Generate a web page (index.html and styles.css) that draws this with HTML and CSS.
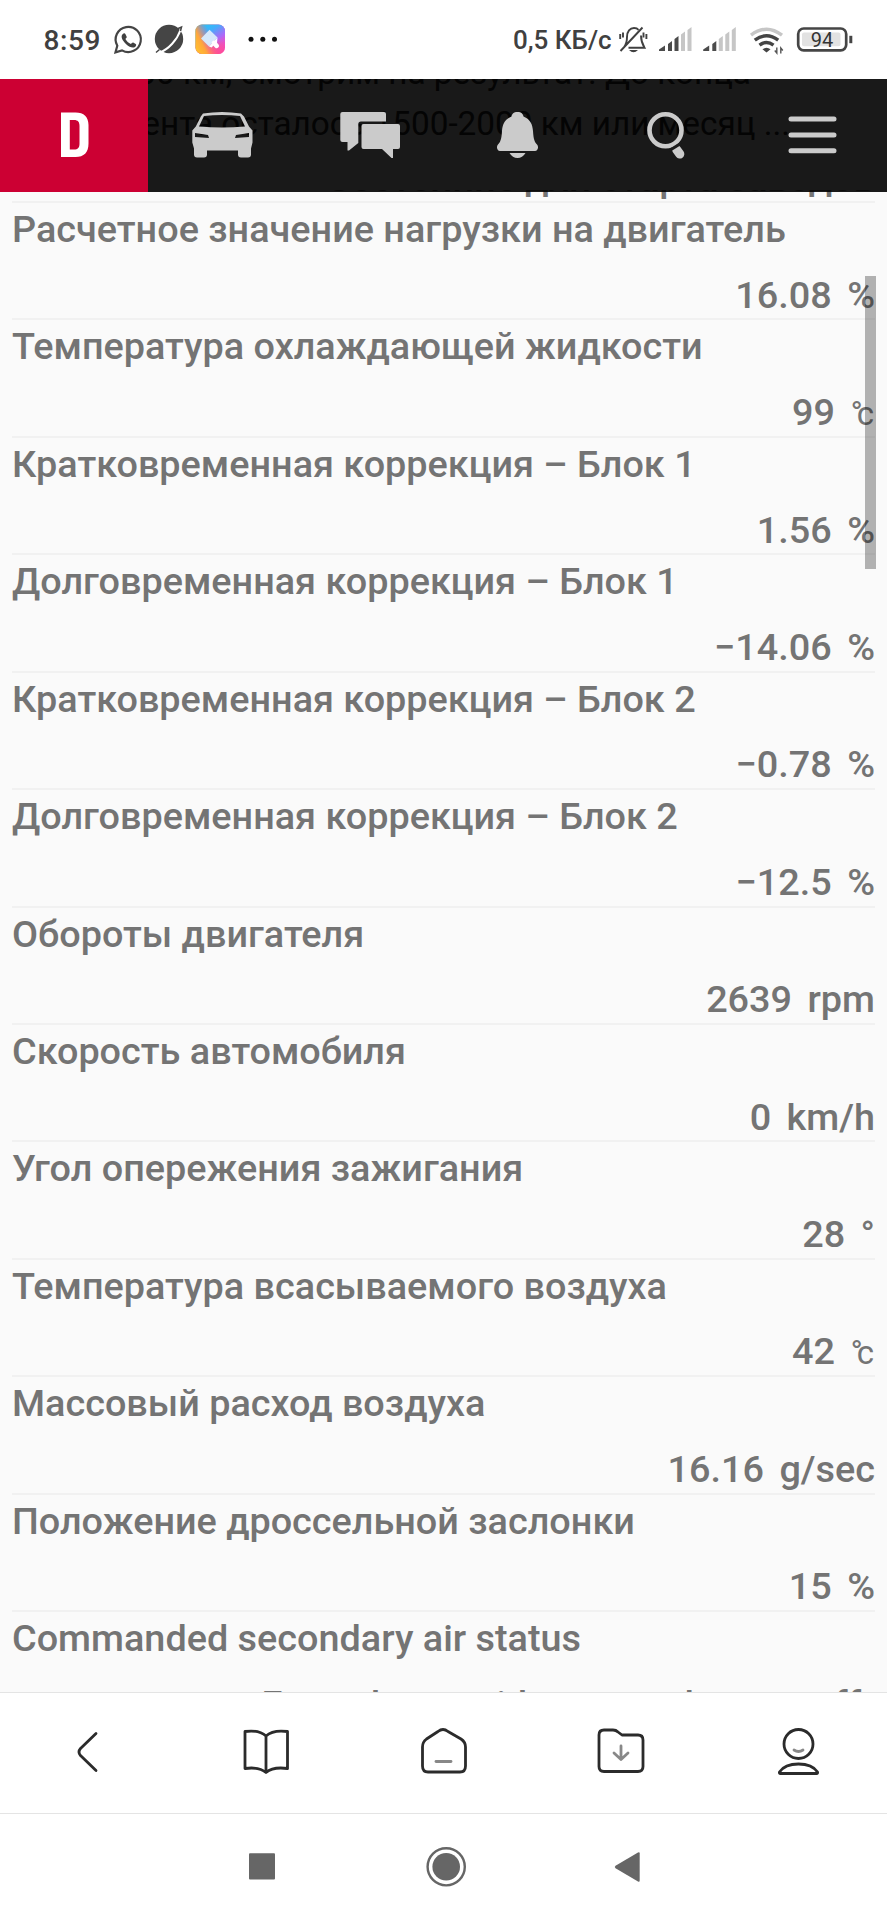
FILE: index.html
```
<!DOCTYPE html>
<html lang="ru">
<head>
<meta charset="utf-8">
<title>D</title>
<link rel="stylesheet" href="styles.css">
</head>
<body>
<div class="status">
  <span class="clock">8:59</span>
  <svg class="status-left" width="172" height="79" viewBox="110 0 172 79">
    <g fill="none" stroke="#454545" stroke-width="2.2"><path d="M115.500 52.300l1.800-6.600a12.600 12.600 0 1 1 4.700 4.700z"/></g>
    <path d="M122.800 34c1-1 2.200-.9 2.700.2l1.200 2.600c.3.900-.9 1.600-1.300 2.300 1.300 2.400 2.900 3.800 5.500 4.900.8-.6 1.500-1.700 2.300-1.400l2.500 1.300c.9.500.5 2.100-.7 3-2.100 1.500-5.600.300-8.800-2.700-4-3.800-6-7.800-3.400-10.200z" fill="#404040"/>
    <circle cx="169" cy="39" r="14.200" fill="#454545"/><path d="M159 53C169 49 177 40 180.500 30" stroke="#fff" stroke-width="2" fill="none"/><path d="M156 52.500l3.500-3M177 29l4.500-2-1 4" stroke="#454545" stroke-width="1.500" fill="none"/>
    <defs><linearGradient id="app" x1="0" y1="0" x2="1" y2="0"><stop offset="0" stop-color="#f9cb36"/><stop offset=".5" stop-color="#ff707c"/><stop offset="1" stop-color="#f04ad4"/></linearGradient><linearGradient id="sky" x1=".3" y1="0" x2=".9" y2=".9"><stop offset="0" stop-color="#2cc0f5"/><stop offset=".25" stop-color="#3fb0fb"/><stop offset=".6" stop-color="#a56bff" stop-opacity=".9"/><stop offset="1" stop-color="#ff4fa0" stop-opacity="0"/></linearGradient><linearGradient id="warm" x1="0" y1=".8" x2=".6" y2=".5"><stop offset="0" stop-color="#ffc02e"/><stop offset=".4" stop-color="#ffa63c"/><stop offset="1" stop-color="#ff5590" stop-opacity="0"/></linearGradient><linearGradient id="pink" x1="0" y1="1" x2="0" y2="0"><stop offset="0" stop-color="#ff4b95"/><stop offset=".45" stop-color="#ff4b95" stop-opacity="0"/></linearGradient></defs>
    <rect x="195.500" y="24.500" width="29.500" height="29.500" rx="6.500" fill="url(#app)"/><rect x="195.500" y="24.500" width="29.500" height="29.500" rx="6.500" fill="url(#sky)"/><rect x="195.500" y="24.500" width="29.500" height="29.500" rx="6.500" fill="url(#pink)"/><rect x="195.500" y="24.500" width="29.500" height="29.500" rx="6.500" fill="url(#warm)"/>
    <path d="M209.500 29.800l8 7.600-8.500 9-8-8z" fill="#d5e8fb"/><path d="M217.500 37.400l-8.500 9 2.600 1.200 2.400-2.600 2.600 2.600" fill="#fff"/><path d="M214 43l2.700 2.900" stroke="#fff" stroke-width="4.600" stroke-linecap="round"/>
    <g fill="#111"><circle cx="251" cy="39.300" r="2.500"/><circle cx="262.800" cy="39.300" r="2.500"/><circle cx="274.500" cy="39.300" r="2.500"/></g>
  </svg>
  <span class="speed">0,5 КБ/с</span>
  <svg class="status-right" width="235" height="79" viewBox="618 0 235 79">
    <g fill="none" stroke="#404040" stroke-width="1.900"><path d="M620.500 51l22-23.500M624 47c2.500-3 3-6 3-10 0-5.500 3-9 7-9 2 0 3.500.600 4.500 1.800M641 35.500c0 5 1 8 3.500 12.300H628.500M620.200 34v5M623 32.500v5M643.500 32.500v5M646.400 34v5"/></g><path d="M629 50h9q-4.500 4.500-9 0z" fill="#404040"/>
    <g fill="#4b4b4b"><path d="M659 51v-1.500l6-4V51zM668 44l4-3v10h-4zM674.500 39l4-3v15h-4z"/><path d="M703.200 51v-1.500l6-4V51zM712.300 44l4-3v10h-4z"/></g>
    <g fill="#c6c6c6"><path d="M681 34.500l4-3V51h-4zM687.500 30l4-3v24h-4zM718.800 39l4-3v15h-4zM725.300 34.500l4-3V51h-4zM731.800 30l4-3v24h-4z"/></g>
    <g fill="none" stroke-width="3.400"><path d="M751 35.200q15.500-12 31 0" stroke="#c6c6c6"/><path d="M754.800 40.200q11.700-9 23.400 0M759.500 45.200q7-5.300 14 0" stroke="#444"/></g><path d="M762.500 49.200q4-3 8 0l-4 3.300z" fill="#444"/><path d="M776.800 47.500v5.500l-2-2.500M780.800 53.500V48l2 2.500" fill="none" stroke="#555" stroke-width="1.400"/>
    <rect x="798.200" y="28.500" width="48" height="21.800" rx="5.500" fill="none" stroke="#454545" stroke-width="2.700"/><rect x="802" y="32.500" width="38.500" height="13.700" rx="2" fill="#e2e2e2"/><path d="M850.800 35.800v7.400" stroke="#454545" stroke-width="3"/>
    <text class="battery" x="822" y="46.500" text-anchor="middle">94</text>
  </svg>
</div>
<div class="nav">
  <div class="under"><p class="u1">500 км, смотрим на результат. До конца</p><p class="u2">эксперимента осталось 1500-2000 км или месяц ...</p></div>
  <div class="brand"><svg width="30" height="46" viewBox="0 0 30 46"><path fill-rule="evenodd" fill="#fff" d="M1 .5h14.500c8.500 0 13 4.500 13 12.500v18.500c0 9-4.500 13.500-13 13.500H1zM9.800 8v29.500h4.200c4 0 5.500-2 5.500-6V14c0-4-1.500-6-5.500-6z"/></svg></div>
  <div class="tab"><svg width="62" height="48" viewBox="191 111 62 48"><path fill-rule="evenodd" fill="#cbcbcb" d="M203 113.500q19-3 38 0l3 3 5 10 3.500 4v12l-1.500 6v6q0 3-3 3h-7q-3 0-3-3v-4H207v4q0 3-3 3h-7q-3 0-3-3v-6l-1.700-6v-12l3.500-4 5-10zM204 116l-5 10.500q23 2 46 0l-5-10.500q-18-2-36 0zM195 133v4l14 1-1-3zM249 133l-13 2-1 3 14-1z"/></svg></div>
  <div class="tab"><svg width="62" height="48" viewBox="339 111 62 48"><path fill="#cbcbcb" d="M342.500 112H384q2 0 2 2v7.500h-25q-2.700 0-2.700 2.700V143L349 150.500h-1.500V142h-5q-2.200 0-2.200-2v-26q0-2 2.200-2z"/><path fill="#cbcbcb" d="M363.500 124H398q2 0 2 2v21q0 2-2 2h-5v9h-1.500l-9.500-9h-18.500q-2 0-2-2v-21q0-2 2-2z"/></svg></div>
  <div class="tab"><svg width="62" height="48" viewBox="486.500 111 62 48"><path fill="#cbcbcb" d="M518 112c-4 0-5.500 2-6 4.500-7 3-9 8-9.500 14.500-.5 8-1.500 11-4 13.500-2 2-1 6.500 2 6.500h35c3 0 4-4.500 2-6.500-2.500-2.500-3.500-5.500-4-13.500-.5-6.500-2.500-11.500-9.500-14.500-.5-2.500-2-4.500-6-4.500zM510 153h16q-3 5-8 5t-8-5z"/></svg></div>
  <div class="tab"><svg width="62" height="48" viewBox="634.500 111 62 48"><circle cx="666" cy="130.300" r="16" fill="none" stroke="#cbcbcb" stroke-width="4.600"/><path d="M677 149.500l3.300 4.500" stroke="#cbcbcb" stroke-width="9" stroke-linecap="round"/><path d="M670 150.500l12-7.500" stroke="#1a1a1a" stroke-width="3"/></svg></div>
  <div class="tab"><svg width="62" height="48" viewBox="782 111 62 48"><path d="M791 119h43M791 135h43M791 150.800h43" stroke="#cbcbcb" stroke-width="5" stroke-linecap="round"/></svg></div>
</div>
<div class="list">
  <div class="peek">Состояние для старта заводов</div>
  <div class="row"><p class="label">Расчетное значение нагрузки на двигатель</p><p class="value">16.08 %</p></div>
  <div class="row"><p class="label">Температура охлаждающей жидкости</p><p class="value">99 <span class="deg"><span class="ring">°</span>c</span></p></div>
  <div class="row"><p class="label">Кратковременная коррекция – Блок 1</p><p class="value">1.56 %</p></div>
  <div class="row"><p class="label">Долговременная коррекция – Блок 1</p><p class="value">−14.06 %</p></div>
  <div class="row"><p class="label">Кратковременная коррекция – Блок 2</p><p class="value">−0.78 %</p></div>
  <div class="row"><p class="label">Долговременная коррекция – Блок 2</p><p class="value">−12.5 %</p></div>
  <div class="row"><p class="label">Обороты двигателя</p><p class="value">2639 rpm</p></div>
  <div class="row"><p class="label">Скорость автомобиля</p><p class="value">0 km/h</p></div>
  <div class="row"><p class="label">Угол опережения зажигания</p><p class="value">28 °</p></div>
  <div class="row"><p class="label">Температура всасываемого воздуха</p><p class="value">42 <span class="deg"><span class="ring">°</span>c</span></p></div>
  <div class="row"><p class="label">Массовый расход воздуха</p><p class="value">16.16 g/sec</p></div>
  <div class="row"><p class="label">Положение дроссельной заслонки</p><p class="value">15 %</p></div>
  <div class="row"><p class="label">Commanded secondary air status</p><p class="value long">From the outside atmosphere or off</p></div>
  <div class="thumb"></div>
</div>
<div class="toolbar">
  <div><svg width="60" height="60" viewBox="59 1722 60 60"><path d="M96 1733.500l-15.500 15q-3 3.500 0 7l15.500 15"/></svg></div>
  <div><svg width="60" height="60" viewBox="236 1722 60 60"><path d="M266 1736q-7-6.500-21-4.500v37q14-2 21 4 7-6 21.500-4v-37q-14.500-2-21.500 4.500zv36"/></svg></div>
  <div><svg width="60" height="60" viewBox="414 1722 60 60"><path d="M438 1731.500q5-4 10 0l13 7.500q4.500 3 4.500 8v19q0 6-5.500 6H428q-5.500 0-5.500-6v-19q0-5 4-8z"/><path class="soft" d="M436 1761.500h15"/></svg></div>
  <div><svg width="60" height="60" viewBox="591 1722 60 60"><path d="M604 1730h9q3 0 5 2l4 3h16q5 0 5 5v26.500q0 5-5 5h-34q-5 0-5-5V1735q0-5 5-5z"/><path class="soft" d="M621 1746v13.500M614 1753l7 6.500 7-6.500"/></svg></div>
  <div><svg width="60" height="60" viewBox="768 1722 60 60"><circle cx="798.500" cy="1744" r="14.500"/><path d="M798.500 1764c9 0 16 3.500 19 8q.5 1.500-1 1.500h-36q-1.500 0-1-1.500c3-4.500 10-8 19-8z"/><path class="soft" d="M794 1750q4.500 3 9 0"/></svg></div>
</div>
<div class="system">
  <svg width="887" height="106" viewBox="0 1814 887 106"><g fill="#666"><rect x="249" y="1853.300" width="26" height="26.300" rx="1"/><circle cx="446.200" cy="1866.800" r="13.800"/><path d="M615.500 1865.800q-1.500 1.200 0 2.400l22.500 13.200q1.700.8 1.700-1v-26.800q0-1.800-1.700-1z"/></g><circle cx="446.200" cy="1866.800" r="18.600" fill="none" stroke="#666" stroke-width="2.400"/></svg>
</div>
</body>
</html>
```

FILE: styles.css
```
* { box-sizing: border-box; }
body { margin: 0; width: 887px; height: 1920px; overflow: hidden; display: flex; flex-direction: column; background: #fff; font-family: Roboto, "Noto Sans", sans-serif; }
p { margin: 0; white-space: nowrap; }
svg { display: block; flex: none; }

.status { height: 79px; flex: none; display: flex; align-items: center; padding-left: 43.500px; color: #404040; font-weight: 500; }
.clock { width: 66.500px; font-size: 28px; letter-spacing: .6px; white-space: nowrap; padding-top: 1px; }
.speed { margin-left: 231px; width: 105px; font-size: 26px; white-space: nowrap; padding-top: 1px; }
.battery { font-size: 20px; font-weight: 400; fill: #333; }

.nav { height: 112.500px; flex: none; display: flex; position: relative; background: rgba(0, 0, 0, .9); z-index: 2; }
.under { position: absolute; inset: 0; overflow: hidden; display: flex; flex-direction: column; align-items: flex-end; color: #040404; font-size: 33.300px; line-height: 51px; }
.under p { flex: none; }
.u1 { margin: -32px 136px 0 0; }
.u2 { margin-right: 97px; }
.brand { position: relative; width: 148px; display: flex; align-items: center; justify-content: center; background: #c03; padding-left: 2px; }
.tab { position: relative; flex: 1; display: flex; align-items: center; justify-content: center; }

.list { height: 1502.500px; margin-top: -2px; flex: none; position: relative; overflow: hidden; background: #fafafa; color: #747474; font-size: 37.800px; font-weight: 500; line-height: 44px; padding: 0 12px; }
.peek { height: 45.500px; margin-top: -34px; text-align: right; white-space: nowrap; }
.row { height: 117.430px; border-top: 2px solid #f1f1f1; padding-top: 4px; }
.label { height: 65.700px; }
.value { text-align: right; word-spacing: 6px; }
.long { word-spacing: 0; padding-right: 14px; }
.deg { font-weight: 400; font-size: 33px; letter-spacing: 0; padding-right: 1px; }
.ring { margin-right: -6px; }
.thumb { position: absolute; left: 865px; top: 86.500px; width: 11px; height: 293px; background: rgba(0, 0, 0, .29); }

.toolbar { height: 121px; flex: none; display: flex; align-items: center; border-top: 1px solid #e4e4e4; padding-bottom: 2px; }
.toolbar div { flex: 1; display: flex; justify-content: center; }
.toolbar path, .toolbar circle { fill: none; stroke: #2b2b2b; stroke-width: 2.800; stroke-linecap: round; stroke-linejoin: round; }
.toolbar .soft { stroke: #888; }
.system { height: 107px; flex: none; border-top: 1px solid #e4e4e4; }
```
